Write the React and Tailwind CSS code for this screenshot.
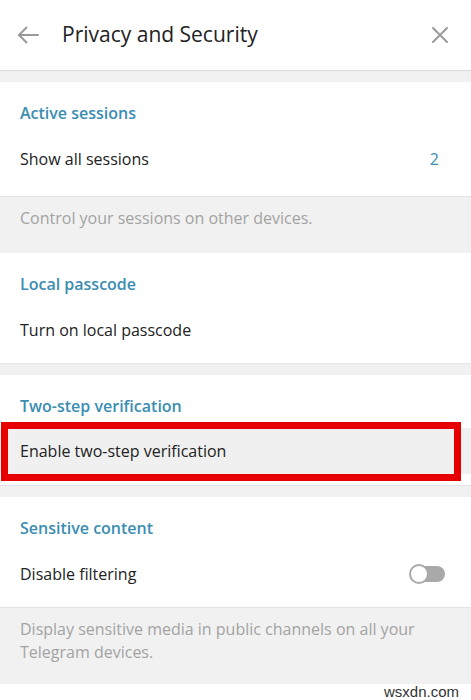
import React, { useState } from "react"

const font = { fontFamily: '"Open Sans", "Noto Sans", sans-serif' }

function SectionTitle({ children }) {
  return (
    <div className="h-[46px] flex items-center px-5 text-[16px] font-semibold text-[#3b8db2]">
      {children}
    </div>
  )
}

function Row({ children, right, hover }) {
  return (
    <div className={`h-[46px] flex items-center justify-between px-5 text-[16px] text-[#222] ${hover ? "bg-[#f0f0f0]" : ""}`}>
      <span>{children}</span>
      {right}
    </div>
  )
}

function Toggle({ on, onClick }) {
  return (
    <button onClick={onClick} className="relative w-[36px] h-[20px] mr-[6px] flex items-center">
      <span className="absolute left-[4px] right-0 h-[16px] rounded-full bg-[#a9a9a9]"></span>
      <span className="absolute left-0 w-[20px] h-[20px] rounded-full bg-white border-[2px] border-[#a9a9a9]"></span>
    </button>
  )
}

export default function App() {
  const [filter, setFilter] = useState(false)

  return (
    <div className="w-[471px] h-[700px] bg-white overflow-hidden" style={font}>
      {/* header */}
      <div className="h-[71px] flex items-center border-b border-[#d9d9d9] bg-white">
        <button className="w-[62px] h-full flex items-center pl-[17px]">
          <svg width="22" height="18" viewBox="0 0 22 18" fill="none" stroke="#9a9a9a" strokeWidth="2" strokeLinecap="round" strokeLinejoin="round">
            <path d="M21 9H2" />
            <path d="M9.5 1.5L2 9l7.5 7.5" />
          </svg>
        </button>
        <div className="flex-1 text-[21px] text-[#222] leading-none pb-[1px]">Privacy and Security</div>
        <button className="w-[60px] h-full flex items-center justify-center pr-[2px]">
          <svg width="18" height="18" viewBox="0 0 18 18" fill="none" stroke="#9a9a9a" strokeWidth="2" strokeLinecap="round">
            <path d="M2 2l14 14M16 2L2 16" />
          </svg>
        </button>
      </div>

      <div className="h-[11px] bg-[#f1f1f1]"></div>

      {/* Active sessions */}
      <div className="pt-[8px] pb-[14px] bg-white">
        <SectionTitle>Active sessions</SectionTitle>
        <Row right={<span className="text-[#3b8db2] pr-[12px]">2</span>}>Show all sessions</Row>
      </div>
      <div className="h-[57px] bg-[#f1f1f1] border-t border-[#e3e3e3] px-5 pt-[10px] text-[16px] leading-[22px] text-[#a3a3a3]">
        Control your sessions on other devices.
      </div>

      {/* Local passcode */}
      <div className="pt-[8px] pb-[10px] bg-white">
        <SectionTitle>Local passcode</SectionTitle>
        <Row>Turn on local passcode</Row>
      </div>
      <div className="h-[12px] bg-[#f1f1f1] border-t border-[#e3e3e3]"></div>

      {/* Two-step verification */}
      <div className="pt-[8px] pb-[11px] bg-white">
        <div className="h-[45px] flex items-center px-5 text-[16px] font-semibold text-[#3b8db2]">
          Two-step verification
        </div>
        <div className="relative">
          <Row hover>Enable two-step verification</Row>
          <div className="absolute -top-[6px] left-[1px] right-[10px] -bottom-[7px] border-[7px] border-[#e60000]"></div>
        </div>
      </div>
      <div className="h-[12px] bg-[#f1f1f1] border-t border-[#e3e3e3]"></div>

      {/* Sensitive content */}
      <div className="pt-[8px] pb-[10px] bg-white">
        <SectionTitle>Sensitive content</SectionTitle>
        <Row right={<Toggle on={filter} onClick={() => setFilter(!filter)} />}>Disable filtering</Row>
      </div>
      <div className="h-[77px] bg-[#f1f1f1] border-t border-[#e3e3e3] px-5 pt-[10px] text-[16px] leading-[23px] text-[#a3a3a3]">
        Display sensitive media in public channels on all your Telegram devices.
      </div>

      <div className="h-[16px] flex items-center justify-end pr-[12px] text-[15px] text-[#333]" style={{ fontFamily: '"Liberation Sans", Arial, sans-serif' }}>
        wsxdn.com
      </div>
    </div>
  )
}
